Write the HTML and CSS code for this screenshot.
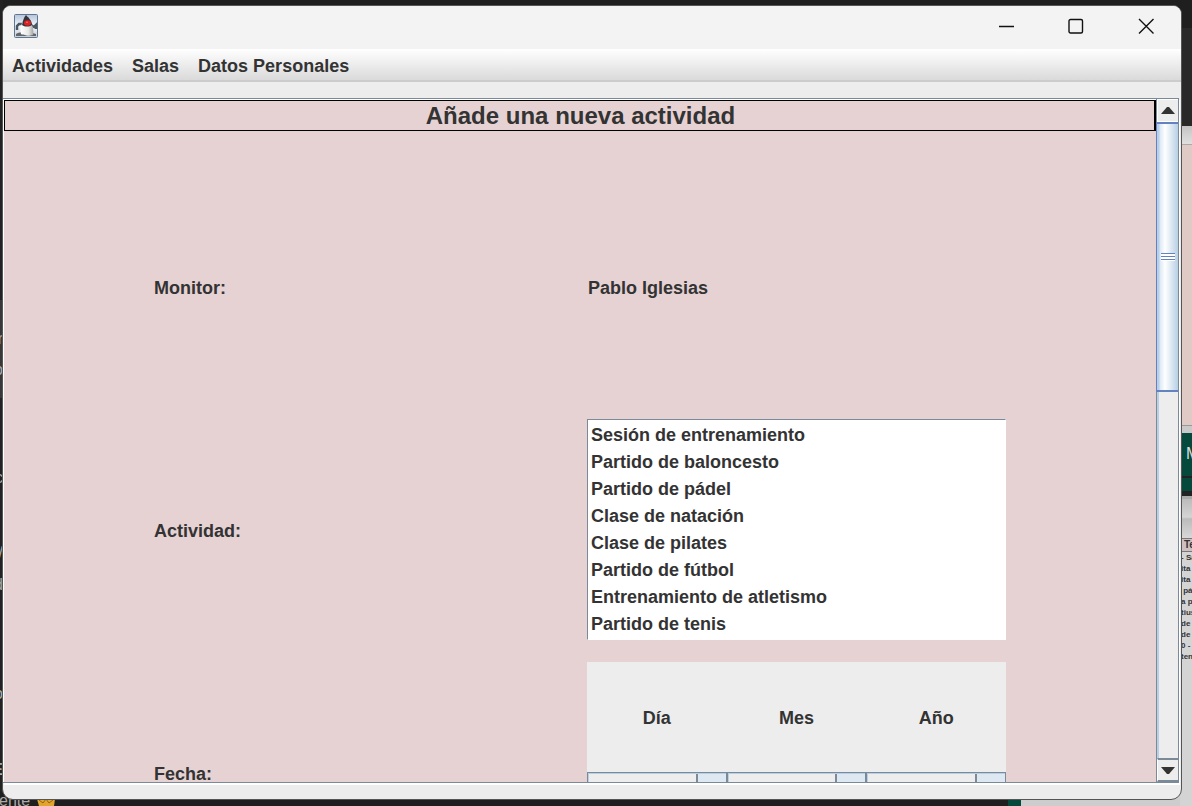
FILE: index.html
```html
<!DOCTYPE html>
<html lang="es">
<head>
<meta charset="utf-8">
<title>Añade una nueva actividad</title>
<link rel="stylesheet" href="styles.css">
</head>
<body>
<div class="behind-left" aria-hidden="true">
  <span class="frag f1">r</span><span class="frag f2">o</span><span class="frag f3">c</span><span class="frag f4">/</span><span class="frag f5">d</span><span class="frag f6">o</span><span class="frag f7">E</span>
</div>
<div class="behind-bottom" aria-hidden="true">
  <span class="chat">ente</span>
  <svg class="emoji" viewBox="0 0 18 8"><path d="M0 1h18l-1 7H2z" fill="#e0a52c"/><path d="M2 2l4 3 3-4 3 4 4-3" stroke="#94601a" fill="none"/></svg>
</div>
<div class="behind-right" aria-hidden="true">
  <div class="r-dark"></div>
  <div class="r-bar"></div>
  <div class="r-pink"></div>
  <div class="r-grey"></div>
  <div class="r-teal">M</div>
  <div class="r-band"></div>
  <div class="r-line"></div>
  <div class="r-fade"></div>
  <div class="r-head">Te</div>
  <ul class="r-list"><li>- Sa</li><li>ita -</li><li>ita -</li><li>&nbsp;pá</li><li>a po</li><li>tius</li><li>de v</li><li>de v</li><li>0 -</li><li>ten</li></ul>
</div>
<main class="window">
  <header class="titlebar">
    <svg class="duke" viewBox="0 0 24 24" role="img" aria-label="Java">
      <defs>
        <linearGradient id="sky" x1="0" y1="0" x2="0" y2="1"><stop offset="0" stop-color="#b3c4da"/><stop offset=".5" stop-color="#f4f7fb"/><stop offset="1" stop-color="#c5ccd6"/></linearGradient>
        <linearGradient id="body" x1="0" y1="0" x2="1" y2="0"><stop offset="0" stop-color="#fff"/><stop offset=".6" stop-color="#e8e8e6"/><stop offset="1" stop-color="#a5a5a3"/></linearGradient>
      </defs>
      <rect x=".5" y=".5" width="23" height="23" rx="1" fill="url(#sky)" stroke="#5f7591"/>
      <path d="M2 20c5-3 14-2 20 0v2H2z" fill="#63676c"/>
      <path d="M8 10H5l-2 2v4M17 11l3 2 2-2v4" fill="none" stroke="#4b5863" stroke-width="2.500"/>
      <path d="M8 9c-1 4-2 6-1 11 1 1 2 0 4 1s4 1 8 0c1-4 0-8-2-12z" fill="url(#body)"/>
      <path d="M12 1c-2 2-3 5-4 10 3 2 7 2 10 0 0-4-3-7-6-10z" fill="#34343a"/>
      <ellipse cx="13.5" cy="9" rx="3.500" ry="2.700" fill="#e02222"/>
      <circle cx="13" cy="8.2" r=".8" fill="#ff7a6c"/>
    </svg>
    <div class="controls">
      <button class="control" aria-label="Minimizar"><svg viewBox="0 0 16 16"><path d="M1 8.5h15"/></svg></button>
      <button class="control" aria-label="Maximizar"><svg viewBox="0 0 16 16"><rect x="1" y="1.5" width="13.5" height="13.5" rx="1.5"/></svg></button>
      <button class="control" aria-label="Cerrar"><svg viewBox="0 0 16 16"><path d="M1 1l14.500 14.500M15.500 1L1 15.500"/></svg></button>
    </div>
  </header>
  <nav class="menubar">
    <button class="menu">Actividades</button>
    <button class="menu">Salas</button>
    <button class="menu">Datos Personales</button>
  </nav>
  <div class="scrollpane">
    <section class="view">
      <h1 class="heading">Añade una nueva actividad</h1>
      <form class="form">
        <span class="label">Monitor:</span>
        <output class="label value">Pablo Iglesias</output>
        <label class="label" for="actividad">Actividad:</label>
        <select class="list" id="actividad" size="8">
          <option>Sesión de entrenamiento</option>
          <option>Partido de baloncesto</option>
          <option>Partido de pádel</option>
          <option>Clase de natación</option>
          <option>Clase de pilates</option>
          <option>Partido de fútbol</option>
          <option>Entrenamiento de atletismo</option>
          <option>Partido de tenis</option>
        </select>
        <span class="label">Fecha:</span>
        <div class="date">
          <label class="label date-label" for="dia">Día</label>
          <label class="label date-label" for="mes">Mes</label>
          <label class="label date-label" for="anio">Año</label>
          <select class="combo" id="dia"></select>
          <select class="combo" id="mes"></select>
          <select class="combo" id="anio"></select>
        </div>
      </form>
    </section>
    <div class="scrollbar">
      <button class="arrow" type="button" aria-label="Subir"><svg viewBox="0 0 14 7"><path d="M0 7L6 0h2l6 7z"/></svg></button>
      <div class="track"><div class="thumb"><span class="grip"></span></div></div>
      <button class="arrow down" type="button" aria-label="Bajar"><svg viewBox="0 0 14 7"><path d="M0 0h14L8 7H6z"/></svg></button>
    </div>
  </div>
</main>
</body>
</html>
```
FILE: styles.css
```css
* { box-sizing: border-box; }
body {
  margin: 0;
  height: 100vh;
  padding: 5px 10px 6px 2px;
  overflow: hidden;
  position: relative;
  background: #1f1f1f;
  color: #333;
  font: bold 18px/20px "Liberation Sans", Arial, sans-serif;
}
button, select { font: inherit; color: inherit; }
button { border: 0; padding: 0; background: none; }

/* Other windows showing around the dialog */
.behind-left {
  position: absolute;
  inset: 0 auto 0 0;
  width: 3px;
  overflow: hidden;
  background: linear-gradient(#222 300px, #383838 300px, #383838 398px, #222 398px);
  color: #aaa;
  font-weight: normal;
  font-size: 16px;
}
.frag { position: absolute; right: 0; }
.f1 { top: 329px; }
.f2 { top: 360px; }
.f3 { top: 468px; }
.f4 { top: 543px; }
.f5 { top: 575px; }
.f6 { top: 684px; }
.f7 { top: 760px; font-weight: bold; }
.behind-bottom {
  position: absolute;
  inset: auto 0 0 0;
  height: 14px;
  overflow: hidden;
  background: linear-gradient(90deg, #1f1f1f 1008px, #04493c 1008px, #04493c 1021px, #cdcdcd 1021px);
}
.chat { position: absolute; left: -1px; top: -1px; color: #aaa; font-weight: normal; font-size: 16px; }
.emoji { position: absolute; left: 37px; bottom: 0; width: 18px; height: 8px; }
.behind-right {
  position: absolute;
  inset: 0 0 0 auto;
  width: 12px;
  overflow: hidden;
  background: #d4d4d4;
  display: flex;
  flex-direction: column;
  color: #333;
  font-size: 8px;
}
.r-dark { height: 126px; background: linear-gradient(#1f1f1f 28px, #292929 28px); }
.r-bar { height: 19px; background: linear-gradient(#c4c4c4, #e0e0e0); border-bottom: 1px solid #aaa; }
.r-pink { height: 280px; background: #dfcac5; }
.r-grey { height: 8px; background: #c9c9c9; border-top: 1px solid #999; }
.r-teal { height: 43px; padding: 11px 0 0 6px; background: #04493c; color: #ddd; font-size: 16px; font-weight: normal; }
.r-band { height: 15px; background: #04493c; border-top: 2px solid #222; }
.r-line { height: 8px; background: linear-gradient(#222 5px, #aaa 5px); }
.r-fade { height: 39px; background: linear-gradient(#bbb, #d4d4d4 18px, #bbb 20px, #d8d8d8); }
.r-head { height: 14px; padding-left: 4px; background: #cfbfc0; border: solid #777; border-width: 1px 0; font-size: 10px; line-height: 12px; }
.r-list { margin: 0; padding: 0 0 0 1px; list-style: none; line-height: 11px; white-space: nowrap; }

.window {
  position: relative;
  height: 100%;
  display: flex;
  flex-direction: column;
  overflow: hidden;
  border: 1px solid #555;
  border-radius: 9px 9px 11px 11px;
  background: #ededed;
}
.titlebar {
  flex: none;
  height: 43px;
  padding: 0 12px 3px 11px;
  display: flex;
  align-items: center;
  justify-content: space-between;
  background: #f3f3f3;
}
.duke { width: 24px; height: 24px; }
.controls { display: flex; gap: 24px; }
.control { width: 46px; height: 32px; display: flex; align-items: center; justify-content: center; }
.control svg { width: 16px; height: 16px; fill: none; stroke: #111; stroke-width: 1.4; }
.menubar {
  flex: none;
  height: 33px;
  padding: 2px 9px 0;
  display: flex;
  align-items: center;
  gap: 19px;
  background: linear-gradient(#fff, #dadada);
  border-bottom: 2px solid #ccc;
}
.scrollpane {
  flex: 1;
  min-height: 0;
  margin: 16px 2px 16px 0;
  display: flex;
  border: solid #7a8a99;
  border-width: 1px 1px 1px 0;
  box-shadow: 1px 2px #fff;
  background: #fff;
}
.view {
  flex: 1;
  overflow: hidden;
  margin-left: 1px;
  padding-top: 1px;
  background: linear-gradient(#fff 1px, #e6d2d3 1px);
}
.heading {
  margin: 0;
  height: 31px;
  padding-left: 2px;
  border: 1px solid #000;
  border-right-width: 2px;
  font-size: 24px;
  line-height: 29px;
  text-align: center;
}
.form {
  padding: 45px 150px;
  display: grid;
  grid-template-columns: 1fr 1fr;
  grid-auto-rows: 221px;
  gap: 22px 14px;
  align-items: center;
}
.label { padding-top: 2px; }
.value { padding-left: 1px; }
.list {
  appearance: none;
  width: 100%;
  height: 100%;
  padding: 2px 0 0;
  overflow: hidden;
  border: 1px solid;
  border-color: #7a8a99 #fff #fff #7a8a99;
  border-radius: 0;
  background: #fff;
  outline: 0;
}
.list option { height: 27px; min-height: 27px; padding: 3px 3px 0; font-weight: bold; line-height: 23px; }
.date {
  height: 100%;
  display: grid;
  grid-template-columns: 1fr 1fr 1fr;
  grid-template-rows: 110px 1fr;
  background: #ededed;
}
.date-label { align-self: center; text-align: center; }
.combo {
  appearance: none;
  border: 1px solid #7a8a99;
  border-radius: 0;
  box-shadow: inset 1px 1px #b8cfe5;
  background:
    linear-gradient(#7a8a99, #7a8a99) right 28px top / 2px 100% no-repeat,
    linear-gradient(#dde8f3, #dde8f3) right / 28px 100% no-repeat,
    #ededed;
}
.scrollbar {
  flex: none;
  width: 22px;
  display: flex;
  flex-direction: column;
  border-left: 1px solid #7a8a99;
}
.arrow {
  height: 23px;
  display: flex;
  align-items: center;
  justify-content: center;
  border: 1px solid #fff;
  border-right-width: 0;
  background: #ededed;
}
.arrow svg { width: 14px; height: 7px; fill: #333; }
.down { height: 24px; border-top: 2px solid #7a8a99; border-bottom: 2px solid #7a8a99; }
.track { flex: 1; background: linear-gradient(90deg, #b8cfe5 2px, #ededed 2px); }
.thumb {
  height: 42.4%;
  margin-left: -1px;
  display: flex;
  align-items: center;
  justify-content: center;
  border: solid #6382bf;
  border-width: 2px 0 2px 1px;
  background: linear-gradient(90deg, #b8cfe5 2px, #dce9f5 3px, #fff 8px, #b8cfe5);
}
.grip { width: 14px; height: 8px; background: repeating-linear-gradient(#6382bf 0 1px, #fff 1px 3px); }
```
